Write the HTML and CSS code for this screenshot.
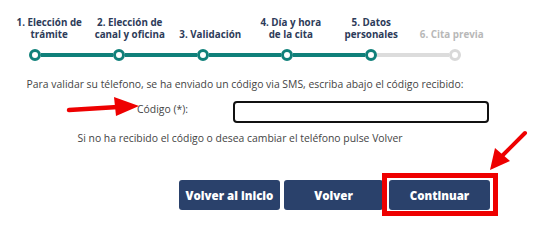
FILE: index.html
```html
<!DOCTYPE html>
<html lang="es">
<head>
<meta charset="utf-8">
<title>Validación</title>
<link rel="stylesheet" href="styles.css">
</head>
<body>
<div class="page">
  <div class="steps">
    <div class="step">1. Elección de<br>trámite</div>
    <div class="step">2. Elección de<br>canal y oficina</div>
    <div class="step">3. Validación</div>
    <div class="step">4. Día y hora<br>de la cita</div>
    <div class="step">5. Datos<br>personales</div>
    <div class="step step-off">6. Cita previa</div>
  </div>
  <div class="track">
    <span class="dot"></span><span class="seg"></span>
    <span class="dot"></span><span class="seg"></span>
    <span class="dot"></span><span class="seg"></span>
    <span class="dot"></span><span class="seg"></span>
    <span class="dot"></span><span class="seg seg-off"></span>
    <span class="dot dot-off"></span>
  </div>
  <div class="content">
    <p class="info">Para validar su télefono, se ha enviado un código via SMS, escriba abajo el código recibido:</p>
    <div class="code-row">
      <label class="code-label" for="code">Código (*):</label>
      <input class="code-input" id="code" type="text">
    </div>
    <p class="hint">Si no ha recibido el código o desea cambiar el teléfono pulse Volver</p>
    <div class="actions">
      <button class="btn btn-home">Volver al inicio</button>
      <button class="btn btn-back">Volver</button>
      <button class="btn btn-next">Continuar</button>
    </div>
  </div>
  <svg class="marks" width="545" height="229" viewBox="0 0 545 229">
    <line x1="69" y1="110" x2="118" y2="107" stroke="#ee0000" stroke-width="4.5" stroke-linecap="round"/>
    <polygon points="114,97 139,106 116,116" fill="#ee0000"/>
    <line x1="525" y1="133" x2="500" y2="158" stroke="#ee0000" stroke-width="4" stroke-linecap="round"/>
    <polygon points="490,170 495,148 510,161" fill="#ee0000"/>
    <rect x="384.5" y="175.5" width="111" height="38" fill="none" stroke="#ee0000" stroke-width="5"/>
  </svg>
</div>
</body>
</html>
```
FILE: styles.css
```css
* { box-sizing: border-box; }
html, body { margin: 0; padding: 0; background: #ffffff; }
body { font-family: "Open Sans", "Liberation Sans", sans-serif; }
.page { position: relative; width: 545px; height: 229px; overflow: hidden; }

.steps {
  display: grid;
  grid-template-columns: repeat(6, 80.5px);
  align-items: end;
  margin-left: 9px;
  padding-top: 17px;
}
.step {
  font-size: 9.8px;
  line-height: 12px;
  font-weight: 700;
  color: #2d3b59;
  text-align: center;
  white-space: nowrap;
}
.step-off { color: #b8b8b8; }

.track {
  display: flex;
  align-items: center;
  width: 432px;
  margin-left: 29px;
  margin-top: 8px;
}
.dot {
  width: 12px;
  height: 12px;
  border: 3px solid #10807a;
  border-radius: 50%;
  background: #fff;
  flex: none;
}
.dot-off { border-color: #d9d9d9; }
.seg { flex: 1; height: 4px; background: #10807a; }
.seg-off { background: #dcdcdc; }

.content { width: 490px; }
.info {
  margin: 17px 0 0;
  text-align: center;
  font-size: 10.4px;
  line-height: 13px;
  color: #444;
  font-weight: 400;
}
.code-row {
  display: flex;
  align-items: center;
  margin-top: 10px;
}
.code-label {
  width: 188px;
  text-align: right;
  font-size: 10.4px;
  color: #444;
  margin-right: 45px;
  margin-top: -6px;
}
.code-input {
  width: 256px;
  height: 22px;
  border: 2px solid #111;
  border-radius: 4px;
  background: #fff;
  margin: 0;
}
.hint {
  margin: 9px 0 0;
  padding-right: 10px;
  text-align: center;
  font-size: 10.4px;
  line-height: 13px;
  color: #444;
}
.actions {
  display: flex;
  justify-content: flex-end;
  gap: 4px;
  margin-top: 35px;
}
.btn {
  height: 30px;
  border: none;
  border-radius: 3px;
  background: #2a416b;
  color: #fff;
  font-family: "Open Sans", "Liberation Sans", sans-serif;
  font-weight: 800;
  font-size: 11.5px;
  padding: 0;
}
.btn-home { width: 101px; }
.btn-back { width: 99px; }
.btn-next { width: 101px; margin-left: 2px; }

.marks { position: absolute; top: 0; left: 0; pointer-events: none; }
```
